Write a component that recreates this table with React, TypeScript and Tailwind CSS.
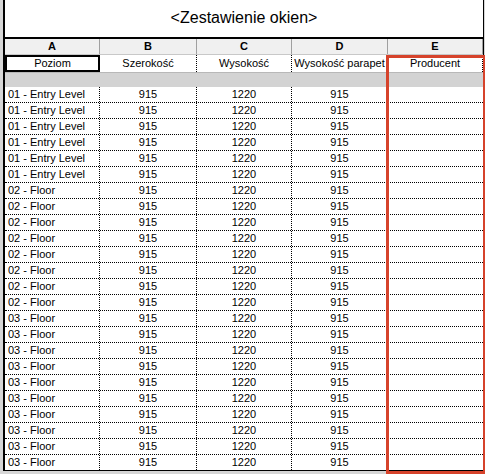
const columns = [
  { letter: 'A', name: 'Poziom' },
  { letter: 'B', name: 'Szerokość' },
  { letter: 'C', name: 'Wysokość' },
  { letter: 'D', name: 'Wysokość parapet' },
  { letter: 'E', name: 'Producent' },
];

const levels = [
  ...Array(6).fill('01 - Entry Level'),
  ...Array(8).fill('02 - Floor'),
  ...Array(10).fill('03 - Floor'),
];

const grid = 'grid grid-cols-[95px_97px_95px_96px_95px]';

export default function App() {
  return (
    <div
      className="relative w-[485px] h-[474px] overflow-hidden bg-[#d6d6d6] pl-[3px]"
      style={{ fontFamily: '"Liberation Sans", Arial, sans-serif' }}
    >
      <div className="w-[481px] h-[471px] bg-white border-l-2 border-r border-b border-black text-black">
        {/* title */}
        <div className="h-[39px] border-b-2 border-black flex items-center justify-center text-[16px] pb-[1px]">
          &lt;Zestawienie okien&gt;
        </div>

        {/* column letters */}
        <div className={`${grid} h-[16px] bg-[#f0f0f0] border-b border-[#c8c8c8]`}>
          {columns.map((c) => (
            <div
              key={c.letter}
              className="border-r border-[#a0a0a0] flex items-center justify-center text-[11px] font-bold leading-none"
            >
              {c.letter}
            </div>
          ))}
        </div>

        {/* field names */}
        <div className={`${grid} h-[17px]`}>
          {columns.map((c, i) => (
            <div
              key={c.name}
              className={
                i === 0
                  ? 'border-2 border-black flex items-center justify-center text-[11px] leading-none whitespace-nowrap'
                  : 'border-r border-dotted border-black flex items-center justify-center text-[11px] leading-none whitespace-nowrap overflow-hidden'
              }
            >
              {c.name}
            </div>
          ))}
        </div>

        {/* group band */}
        <div className="h-[15px] bg-[#d3d3d3] border-t border-[#b8b8b8]" />

        {/* data rows */}
        {levels.map((lvl, i) => (
          <div key={i} className={`${grid} h-[16px] border-b border-dotted border-black text-[11px] leading-none`}>
            <div className="border-r border-dotted border-black flex items-center pl-[3px] whitespace-nowrap">{lvl}</div>
            <div className="border-r border-dotted border-black flex items-center justify-center">915</div>
            <div className="border-r border-dotted border-black flex items-center justify-center">1220</div>
            <div className="border-r border-dotted border-black flex items-center justify-center">915</div>
            <div />
          </div>
        ))}
      </div>

      {/* highlight around column E */}
      <div className="absolute left-[386px] top-[55px] w-[100px] h-[419px] border-[3px] border-[#d6432b] pointer-events-none" />
    </div>
  );
}
